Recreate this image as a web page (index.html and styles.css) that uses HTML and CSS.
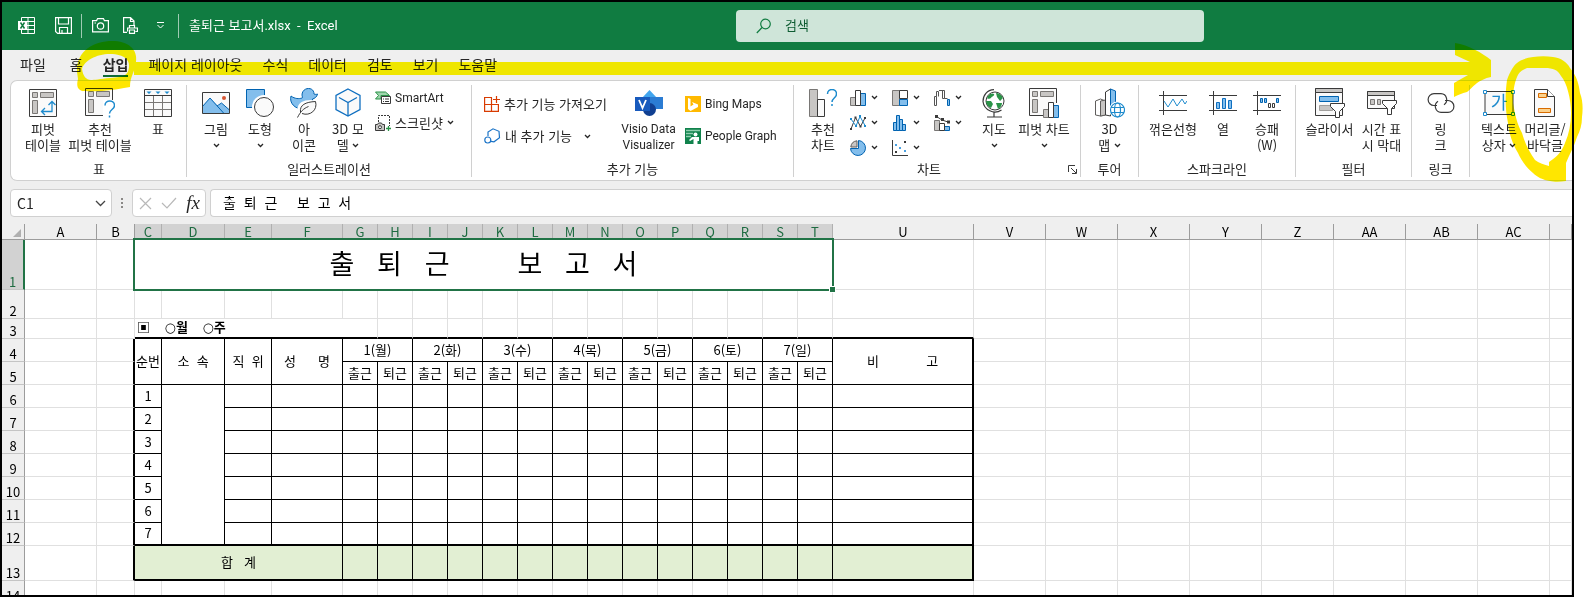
FILE: index.html
```html
<!DOCTYPE html>
<html lang="ko">
<head>
    <meta charset="utf-8">
    <title>출퇴근 보고서.xlsx - Excel</title>
    <link rel="stylesheet" href="styles.css">
</head>
<body>

<div class="window">
    <header class="titlebar">
        <div class="quick">
            <svg class="excel-logo" width="17" height="17" viewBox="0 0 17 17" fill="none" stroke="#fff"><path d="M3.500 4V.5h13v16h-13V13M10 .5v16M3.500 4.500h13M3.500 8.500h13M3.500 12.500h13"/><path d="M0 4h9v9H0z" fill="#fff" stroke="none"/><path d="M2.500 5.500l4 6M6.500 5.500l-4 6" stroke="#107c41" stroke-width="1.500"/></svg>
            <button class="qbtn" aria-label="저장"><svg width="17" height="17" viewBox="0 0 17 17" fill="none" stroke="#fff" stroke-width="1.200"><path d="M.6.6h15.800v15.800H2.600l-2-2zM3.500.6v6.400h10V.6M4.500 16v-5.500h8V16M7 13v3"/></svg></button>
            <span class="qsep"></span>
            <button class="qbtn" aria-label="카메라"><svg width="17" height="15" viewBox="0 0 17 15" fill="none" stroke="#fff" stroke-width="1.200"><path d="M.6 2.600h4l1-2h5.800l1 2h4v11.200H.6z"/><circle cx="8.500" cy="8" r="3.200"/><path d="M2.500 5h1.500"/></svg></button>
            <button class="qbtn" aria-label="빠른 인쇄"><svg width="15" height="17" viewBox="0 0 15 17" fill="none" stroke="#fff" stroke-width="1.200"><path d="M4 15.400H.6V.6h6.900l3.500 3.500V8M7.500.6v3.900H11M6.500 11V8.500h5V11M4.600 14.500V11h9.800v3.500h-2M6.500 13h5v3.400h-5z"/></svg></button>
            <button class="qbtn" aria-label="사용자 지정"><svg width="9" height="7" viewBox="0 0 9 7" fill="none" stroke="#fff"><path d="M1 .5h7M1.500 3l3 3 3-3"/></svg></button>
            <span class="qsep"></span>
            <span class="doc-title">출퇴근 보고서<span class="latin">.xlsx &nbsp;-&nbsp; Excel</span></span>
        </div>
        <label class="search">
            <svg width="16" height="16" viewBox="0 0 16 16" fill="none" stroke="#107c41" stroke-width="1.200"><circle cx="9.500" cy="6" r="4.800"/><path d="M6 9.500L.8 15"/></svg>
            <input type="text" placeholder="검색" aria-label="검색">
        </label>
    </header>

    <nav class="tabs">
        <button class="tab file">파일</button>
        <button class="tab">홈</button>
        <button class="tab active">삽입</button>
        <button class="tab">페이지 레이아웃</button>
        <button class="tab">수식</button>
        <button class="tab">데이터</button>
        <button class="tab">검토</button>
        <button class="tab">보기</button>
        <button class="tab">도움말</button>
    </nav>

    <div class="ribbon">
        <section class="group g-tables">
            <div class="items">
                <button class="big w50"><span class="ico"><svg width="28" height="28" viewBox="0 0 28 28" fill="none"><path d="M.5.5h27v27H.5z" fill="#fafafa" stroke="#3a3a3a"/><path d="M3.500 3.500h5v5h-5zM11.500 3.500h13v5h-13zM3.500 11.500h5v13h-5z" fill="#c8c6c4" stroke="#797775"/><path d="M12.500 22.500h10.500V12.500M16 19l-3.500 3.500L16 26M19.500 16l3.500-3.500 3.500 3.500" stroke="#1e8bcd" stroke-width="1.300"/></svg></span>피벗<br>테이블</button>
                <button class="big w64"><span class="ico"><svg width="30" height="30" viewBox="0 0 30 30" fill="none"><path d="M27.500 12V.5H.5v27H18" fill="#fafafa" stroke="#3a3a3a"/><path d="M3.500 3.500h5v5h-5zM11.500 3.500h13v5h-13zM3.500 11.500h5v13h-5z" fill="#c8c6c4" stroke="#797775"/><path d="M18 12h12v18H18z" fill="#fff"/><path d="M20 17.500c0-6 9.500-6 9.500 0 0 4-5 4-5 8M24.500 27.500v2" stroke="#1e8bcd" stroke-width="1.500"/></svg></span>추천<br>피벗 테이블</button>
                <button class="big w52"><span class="ico"><svg width="28" height="28" viewBox="0 0 28 28" fill="none"><path d="M.5.5h27v27H.5z" fill="#fafafa"/><path d="M9.500 7v20M18.500 7v20M1 13.500h26M1 20.500h26" stroke="#797775"/><path d="M.5.5h27v27H.5zM.5 6.500h27" stroke="#3a3a3a"/><path d="M2.500 2.500h5L5 5zM11.500 2.500h5L14 5zM20.500 2.500h5L23 5z" fill="#1e8bcd"/></svg></span>표</button>
            </div>
            <div class="group-name"><span>표</span></div>
        </section>

        <section class="group g-illust">
            <div class="items">
                <button class="big w44"><span class="ico"><svg width="28" height="22" viewBox="0 0 28 22"><path d="M.5.5h27v21H.5z" fill="#fafafa"/><path d="M.5 14.500L8 6l8 8 3.500-3 8 7v3.500H.5z" fill="#83beec"/><path d="M.5 14.500L8 6l14 15.500M15 14l4.500-3 8 7" fill="none" stroke="#0063b1"/><circle cx="22" cy="6" r="2" fill="#d65532"/><path d="M.5.5h27v21H.5z" fill="none" stroke="#3a3a3a"/></svg></span>그림<br><svg class="chev" viewBox="0 0 7 5"><path d="M1 1l2.500 2.500L6 1"/></svg></button>
                <button class="big w44"><span class="ico"><svg width="28" height="28" viewBox="0 0 28 28"><path d="M.5.5h18v18H.5z" fill="#83beec" stroke="#0063b1"/><circle cx="18" cy="18" r="12" fill="#fff"/><circle cx="18" cy="18" r="9.500" fill="#fafafa" stroke="#3a3a3a"/></svg></span>도형<br><svg class="chev" viewBox="0 0 7 5"><path d="M1 1l2.500 2.500L6 1"/></svg></button>
                <button class="big w44"><span class="ico"><svg width="28" height="30" viewBox="0 0 28 30"><path d="M1 8c4 3 8 3 11 2 1 0 0-2 0-3 0-8 12-9 12-1 1 .5 2.500.5 3.500 0-.5 3-3 4.500-5 5 1 4-4 10-10 10C5 21-1 15 1 8z" fill="#83beec" stroke="#0063b1"/><path d="M9 24c-1-8 4-12 18-10 1 9-5 15-15 12z" fill="#fff" stroke="#fff" stroke-width="3"/><path d="M10.500 24c-1-7 5-10 15-10.500C28 22 20 28.500 12 25.500M7.500 29.500c3-6 6-9 11-11" fill="#fafafa" stroke="#3a3a3a"/></svg></span>아<br>이콘</button>
                <button class="big w44"><span class="ico"><svg width="26" height="30" viewBox="0 0 26 30" fill="#fafafa" stroke="#0f6fc0" stroke-width="1.300"><path d="M13 1l12 6.500v14L13 28 1 21.500v-14z"/><path d="M4 9.500l9 5 9-5M13 14.500V28" fill="none"/></svg></span>3D 모<br>델 <svg class="chev" viewBox="0 0 7 5"><path d="M1 1l2.500 2.500L6 1"/></svg></button>
                <div class="stack rows25">
                    <button class="small latin"><svg width="16" height="14" viewBox="0 0 16 14"><path d="M.5 1h10l4 3.500H6V8H.5l3-3.500z" fill="#9fd5ad" stroke="#2b9348"/><path d="M6.500 5.500h9v7h-9z" fill="#fff" stroke="#3a3a3a"/><path d="M8 8h1M10 8h4M8 10.500h1M10 10.500h4" stroke="#3a3a3a"/></svg>SmartArt</button>
                    <button class="small"><svg width="16" height="16" viewBox="0 0 16 16" fill="none"><path d="M3.500 7V.5h11V11" stroke="#3a3a3a" stroke-dasharray="2 1"/><path d="M.5 9.500h2l1-1.500h3l1 1.500h2v6h-9z" fill="#c8c6c4" stroke="#3a3a3a"/><circle cx="5" cy="12.200" r="1.500" fill="#fff" stroke="#3a3a3a"/><path d="M13.500 11v5M11 13.500h5" stroke="#2b9348" stroke-width="1.300"/></svg>스크린샷 <svg class="chev" viewBox="0 0 7 5"><path d="M1 1l2.500 2.500L6 1"/></svg></button>
                </div>
            </div>
            <div class="group-name"><span>일러스트레이션</span></div>
        </section>

        <section class="group g-addins">
            <div class="items">
                <div class="stack rows32 w128">
                    <button class="small"><svg width="16" height="16" viewBox="0 0 16 16" fill="none" stroke="#d83b01" stroke-width="1.200"><path d="M8 1.500H.6v13.900h13.800V8.500H.6M7.500 1.500v13.900M12.500 0v7M9 3.500h7"/></svg>추가 기능 가져오기</button>
                    <button class="small"><svg width="17" height="16" viewBox="0 0 17 16" fill="none" stroke="#1a73c7" stroke-width="1.200"><path d="M4 8V4l5-3.200 6 2.500.5 6.500-5.500 4-3-.5"/><circle cx="3.800" cy="12" r="3"/></svg>내 추가 기능 <svg class="chev apart" viewBox="0 0 7 5"><path d="M1 1l2.500 2.500L6 1"/></svg></button>
                </div>
                <button class="big w73 latin"><span class="ico"><svg width="28" height="27" viewBox="0 0 28 27"><path d="M14.500 0L22 8l-7.500 8L7 8z" fill="#41a5ee"/><path d="M14 7h14v12H14z" fill="#2b7cd3"/><circle cx="14.500" cy="19.500" r="6.500" fill="#103f91"/><path d="M0 7h15v14H0z" fill="#185abd"/><path d="M4 10l3.500 8L11 10" fill="none" stroke="#fff" stroke-width="1.800"/></svg></span>Visio Data<br>Visualizer</button>
                <div class="stack rows32">
                    <button class="small latin"><svg width="16" height="16" viewBox="0 0 16 16"><path d="M0 0h16v16H0z" fill="#ffb900"/><path d="M3 2l2.500 1v7.500l3-2L7 6l6 2.500v2.500L5.500 15 3 13z" fill="#fff"/></svg>Bing Maps</button>
                    <button class="small latin"><svg width="16" height="16" viewBox="0 0 16 16"><path d="M0 0h16v16H0z" fill="#10824c"/><path d="M1 2.500h14M1 5.500h7M1 8.500h5" stroke="#8fd0ae" stroke-width="1.500"/><circle cx="10.500" cy="6.500" r="2" fill="#fff"/><path d="M7 9h7v4h-1.500v3h-4v-5L5 13l-1-1z" fill="#fff"/></svg>People Graph</button>
                </div>
            </div>
            <div class="group-name"><span>추가 기능</span></div>
        </section>

        <section class="group g-charts">
            <div class="items">
                <button class="big w50"><span class="ico"><svg width="28" height="28" viewBox="0 0 28 28" fill="none"><path d="M.5.5h8v27h-8z" fill="#c8c6c4" stroke="#797775"/><path d="M8.500 10.500h7v17h-7z" fill="#fafafa" stroke="#3a3a3a"/><path d="M18.500 5c0-6 9-6 9 0 0 4-4.500 4-4.500 8M23 15v2" stroke="#1e8bcd" stroke-width="1.500"/></svg></span>추천<br>차트</button>
                <div class="chart-grid">
                    <button class="small mini" aria-label="세로 막대형"><svg width="16" height="16" viewBox="0 0 16 16"><path d="M.5 7.500h5v8h-5z" fill="#c8c6c4" stroke="#797775"/><path d="M10.500 3.500h5v12h-5z" fill="#83beec" stroke="#0063b1"/><path d="M5.500.5h5v15h-5z" fill="#fff" stroke="#3a3a3a"/></svg><svg class="chev" viewBox="0 0 7 5"><path d="M1 1l2.500 2.500L6 1"/></svg></button>
                    <button class="small mini" aria-label="계층 구조"><svg width="16" height="16" viewBox="0 0 16 16"><path d="M.5.5h7v15h-7z" fill="#c8c6c4" stroke="#797775"/><path d="M7.500.5h8v8h-8z" fill="#fff" stroke="#3a3a3a"/><path d="M7.500 9.500h8v6h-8z" fill="#83beec" stroke="#0063b1"/></svg><svg class="chev" viewBox="0 0 7 5"><path d="M1 1l2.500 2.500L6 1"/></svg></button>
                    <button class="small mini" aria-label="폭포"><svg width="16" height="16" viewBox="0 0 16 16"><path d="M.5 15.500v-9h2v9zM2.500 6.500v-5h2v5M8.500.5h2v8h-2zM5 .5h5" fill="#fff" stroke="#555"/><path d="M10.500 8.500h3" stroke="#555"/><path d="M13.500 9.500h2v6h-2z" fill="#83beec" stroke="#0063b1"/></svg><svg class="chev" viewBox="0 0 7 5"><path d="M1 1l2.500 2.500L6 1"/></svg></button>
                    <button class="small mini" aria-label="꺾은선형"><svg width="16" height="15" viewBox="0 0 16 15" fill="none"><path d="M1 14L5.500 2.500l5 9L15 3" stroke="#3a3a3a"/><path d="M1 4l5 7L10 1.500l5 9" stroke="#1e8bcd"/><path d="M0 13h2v2H0zM4.500 1.500h2v2h-2zM9.500 10.500h2v2h-2zM14 2h2v2h-2z" fill="#3a3a3a"/><path d="M0 3h2v2H0zM5 10h2v2H5zM9 0h2v2H9zM14 10h2v2h-2z" fill="#1e8bcd"/></svg><svg class="chev" viewBox="0 0 7 5"><path d="M1 1l2.500 2.500L6 1"/></svg></button>
                    <button class="small mini" aria-label="통계"><svg width="16" height="16" viewBox="0 0 16 16" fill="#83beec" stroke="#0063b1"><path d="M1.500 7.500h3v8h-3zM4.500.5h3v15h-3zM7.500 4.500h3v11h-3zM10.500 9.500h3v6h-3z"/></svg><svg class="chev" viewBox="0 0 7 5"><path d="M1 1l2.500 2.500L6 1"/></svg></button>
                    <button class="small mini" aria-label="혼합"><svg width="16" height="16" viewBox="0 0 16 16"><path d="M.5 5.500h5v10h-5z" fill="#c8c6c4" stroke="#797775"/><path d="M10.500 11.500h5v4h-5z" fill="#83beec" stroke="#0063b1"/><path d="M5.500 8.500h5v7h-5z" fill="#fff" stroke="#3a3a3a"/><path d="M2.500 1.500L8 5l6 2" fill="none" stroke="#3a3a3a"/><path d="M1 0h3v3H1zM7 3h3v3H7zM13 5.500h3v3h-3z" fill="#3a3a3a"/></svg><svg class="chev" viewBox="0 0 7 5"><path d="M1 1l2.500 2.500L6 1"/></svg></button>
                    <button class="small mini" aria-label="원형"><svg width="16" height="16" viewBox="0 0 16 16"><path d="M8.500.5v8h-8A7.500 7.500 0 1 0 8.500.5z" fill="#83beec" stroke="#0063b1"/><path d="M7 .8V7H.8A7 7 0 0 1 7 .8z" fill="#c8c6c4" stroke="#605e5c"/></svg><svg class="chev" viewBox="0 0 7 5"><path d="M1 1l2.500 2.500L6 1"/></svg></button>
                    <button class="small mini" aria-label="분산형"><svg width="16" height="16" viewBox="0 0 16 16"><path d="M.5 0v15.500H16" fill="none" stroke="#3a3a3a"/><path d="M12 1h2v2h-2zM3 11h2v2H3z" fill="#3a3a3a"/><path d="M3 4h2v2H3zM7 7h2v2H7zM12 10h2v2h-2z" fill="#4ba0e0"/></svg><svg class="chev" viewBox="0 0 7 5"><path d="M1 1l2.500 2.500L6 1"/></svg></button>
                </div>
                <button class="big w36"><span class="ico"><svg width="24" height="29" viewBox="0 0 24 29" fill="none"><circle cx="13" cy="12" r="9" fill="#fff" stroke="#3a3a3a"/><path d="M6 7c2-3 5-3 6-2 1 2-2 2-3 4-1 1-4 1-4 0zM14 4c3 0 6 2 7 5l-3 3-3-4zM4 12l5 0 2 3-2 4c-3-1-5-4-5-7zM14 14h6c0 3-2 5-4 6z" fill="#2b9348"/><path d="M12 .7C5 1 1 6 1 12.500 2 21 12 26 19.500 21M12 23.500v4M5 28h15" stroke="#3a3a3a" stroke-width="1.200"/></svg></span>지도<br><svg class="chev" viewBox="0 0 7 5"><path d="M1 1l2.500 2.500L6 1"/></svg></button>
                <button class="big w64"><span class="ico"><svg width="30" height="30" viewBox="0 0 30 30"><path d="M27.500 15V.5H.5v27H14" fill="#fafafa" stroke="#3a3a3a"/><path d="M3.500 3.500h5v5h-5zM11.500 3.500h13v5h-13zM3.500 11.500h5v13h-5z" fill="#c8c6c4" stroke="#797775"/><path d="M14.500 21.500h5v8h-5z" fill="#c8c6c4" stroke="#797775"/><path d="M24.500 17.500h5v12h-5z" fill="#83beec" stroke="#0063b1"/><path d="M19.500 14.500h5v15h-5z" fill="#fff" stroke="#3a3a3a"/></svg></span>피벗 차트<br><svg class="chev" viewBox="0 0 7 5"><path d="M1 1l2.500 2.500L6 1"/></svg></button>
            </div>
            <div class="group-name"><span>차트</span><button class="launcher" aria-label="차트 옵션"><svg width="9" height="9" viewBox="0 0 9 9" fill="none" stroke="#3a3a3a"><path d="M.5 7V.5H7M3 3l5 5M8.500 4v4.500H4"/></svg></button></div>
        </section>

        <section class="group g-tour">
            <div class="items">
                <button class="big w44"><span class="ico"><svg width="30" height="30" viewBox="0 0 30 30"><path d="M.5 13l5-2 5 2v14l-5 1-5-1z" fill="#fff" stroke="#605e5c"/><path d="M5.500 13l5-1v15l-5 1z" fill="#c8c6c4" stroke="#605e5c"/><path d="M10.500 4l5-3 0 27-5-1z" fill="#fff" stroke="#3a3a3a"/><path d="M15.500 1l5 2v20h-5z" fill="#83beec" stroke="#0063b1"/><circle cx="22.500" cy="22" r="8.500" fill="#fff"/><g fill="none" stroke="#1e8bcd" stroke-width="1.200"><circle cx="22.500" cy="22" r="7"/><ellipse cx="22.500" cy="22" rx="3" ry="7"/><path d="M16 19.500h13M16 24.500h13"/></g></svg></span>3D<br>맵 <svg class="chev" viewBox="0 0 7 5"><path d="M1 1l2.500 2.500L6 1"/></svg></button>
            </div>
            <div class="group-name"><span>투어</span></div>
        </section>

        <section class="group g-spark">
            <div class="items">
                <button class="big w60"><span class="ico"><svg width="28" height="24" viewBox="0 0 28 24" fill="none"><path d="M0 4.500h28M0 19.500h28M4.500 0v24" stroke="#3a3a3a"/><path d="M5 10l4 6 5-8 4 7 5-7 3 5 2-3" stroke="#1e8bcd"/></svg></span>꺾은선형</button>
                <button class="big w40"><span class="ico"><svg width="28" height="24" viewBox="0 0 28 24" fill="none"><path d="M0 4.500h28M0 19.500h28M4.500 0v24" stroke="#3a3a3a"/><path d="M7.500 11.500h3v6h-3zM13.500 7.500h3v10h-3zM19.500 9.500h3v8h-3z" fill="#83beec" stroke="#0f6fc0"/></svg></span>열</button>
                <button class="big w48"><span class="ico"><svg width="28" height="24" viewBox="0 0 28 24" fill="none"><path d="M0 4.500h28M0 19.500h28M4.500 0v24" stroke="#3a3a3a"/><path d="M7.500 7.500h2v4h-2zM11.500 7.500h2v4h-2zM23.500 7.500h2v4h-2z" fill="#83beec" stroke="#0063b1"/><path d="M15.500 12.500h2v4h-2zM19.500 12.500h2v4h-2z" fill="#fff" stroke="#3a3a3a"/></svg></span>승패<br>(W)</button>
            </div>
            <div class="group-name"><span>스파크라인</span></div>
        </section>

        <section class="group g-filter">
            <div class="items">
                <button class="big w56"><span class="ico"><svg width="30" height="30" viewBox="0 0 30 30"><path d="M.5.5h27v27H.5z" fill="#fafafa" stroke="#3a3a3a"/><path d="M.5.5h27v4H.5z" fill="#c8c6c4" stroke="#3a3a3a"/><path d="M4.500 8.500h19v5h-19z" fill="#83beec" stroke="#0063b1"/><path d="M4.500 17.500h13v5h-13z" fill="#c8c6c4" stroke="#a19f9d"/><path d="M15.500 15.500h14v3l-5 5v6h-4v-6l-5-5z" fill="#fff" stroke="#3a3a3a"/></svg></span>슬라이서</button>
                <button class="big w48"><span class="ico"><svg width="30" height="24" viewBox="0 0 30 24"><path d="M.5.5h27v17H.5z" fill="#fafafa" stroke="#3a3a3a"/><path d="M.5.5h27v4H.5z" fill="#c8c6c4" stroke="#3a3a3a"/><path d="M3.500 8.500h4v5h-4zM10.500 8.500h3v5h-3z" fill="#c8c6c4" stroke="#797775"/><path d="M15.500 9.500h14v3l-5 5v6h-4v-6l-5-5z" fill="#fff" stroke="#3a3a3a"/></svg></span>시간 표<br>시 막대</button>
            </div>
            <div class="group-name"><span>필터</span></div>
        </section>

        <section class="group g-link">
            <div class="items">
                <button class="big w40"><span class="ico"><svg width="28" height="20" viewBox="0 0 28 20" fill="none" stroke="#3a3a3a" stroke-width="1.200"><path d="M10 12.500H7A5.500 5.500 0 0 1 7 .7h7a6 6 0 0 1 3 11"/><path d="M18 7.500h3a5.900 5.900 0 0 1 0 11.800h-7a6 6 0 0 1-3-11"/></svg></span>링<br>크</button>
            </div>
            <div class="group-name"><span>링크</span></div>
        </section>

        <section class="group g-text">
            <div class="items">
                <button class="big w46"><span class="ico"><svg width="32" height="28" viewBox="0 0 32 28"><path d="M2 2.500h28v23H2z" fill="#fafafa" stroke="#3a3a3a"/><path d="M.5 1.500h3v3h-3zM28.500 1.500h3v3h-3zM.5 23.500h3v3h-3zM28.500 23.500h3v3h-3z" fill="#fff" stroke="#1e8bcd"/><text class="ga" x="16" y="20" text-anchor="middle">가</text></svg></span>텍스트<br>상자 <svg class="chev" viewBox="0 0 7 5"><path d="M1 1l2.500 2.500L6 1"/></svg></button>
                <button class="big w46"><span class="ico"><svg width="22" height="28" viewBox="0 0 22 28"><path d="M.5.500h13l7 7v20H.5z" fill="#fafafa" stroke="#3a3a3a"/><path d="M4.500 4.500h8v4h-8zM4.500 19.500h12v4h-12z" fill="#fcd28c" stroke="#d86c00"/><path d="M13.500.5v7h7" fill="#fff" stroke="#3a3a3a"/></svg></span>머리글/<br>바닥글</button>
            </div>
        </section>
    </div>

    <div class="formula-bar">
        <div class="name-box">
            <input type="text" value="C1" aria-label="이름 상자">
            <svg width="11" height="7" viewBox="0 0 11 7" fill="none" stroke="#444" stroke-width="1.300"><path d="M1 1l4.500 4.500L10 1"/></svg>
        </div>
        <svg class="dots" width="3" height="11" viewBox="0 0 3 11" fill="#8a8886"><path d="M0 0h2v2H0zM0 4h2v2H0zM0 8h2v2H0z"/></svg>
        <div class="fx-box">
            <svg width="13" height="13" viewBox="0 0 13 13" fill="none" stroke="#b8b8b8" stroke-width="1.200"><path d="M1 1l11 11M12 1L1 12"/></svg>
            <svg width="16" height="12" viewBox="0 0 16 12" fill="none" stroke="#b8b8b8" stroke-width="1.200"><path d="M1 6l5 5L15 1"/></svg>
            <button class="fx" aria-label="함수 삽입">fx</button>
        </div>
        <input class="formula" type="text" value="출  퇴  근     보  고  서" aria-label="수식 입력줄">
    </div>

    <div class="sheet">
        <table class="grid" id="grid">
            <colgroup id="cols"></colgroup>
            <thead id="head"></thead>
            <tbody id="rows"></tbody>
        </table>
    </div>
</div>

<!-- yellow highlighter marks -->
<svg class="marker" width="1583" height="200" viewBox="0 0 1583 200" fill="#ffe600">
    <path fill-rule="evenodd" d="M77 72C76 50 95 41 112 41c16 0 26 8 24 21-1 10-6 14-6 25l-6 1c-14 3-34 4-42 3-6-2-5-8-4-12zM82 69c2-8 14-15 28-15 15 0 20 7 19 13-1 8-4 10-19 11-10 1-16 2-19 2-5 0-8-4-9-11z"/>
    <path d="M134 62h1336l-15-7V43c14 2 27 10 36 17v17c-6 1-11 4-14 6-5 4-7 7-10 9-5 1-9 3-13 5V83l14-8H134z"/>
    <path fill-rule="evenodd" d="M1507 80c3-9 8-16 10-17 6-6 24-8 36-6 8 1 14 5 17 11 7 8 9 17 10 25 3 8 3 16 2 24 0 8-2 14-5 20-3 10-8 18-11 26v18c-6 1-12 1-16 0-7-1-13-4-17-8-7-6-12-13-15-20-6-10-9-20-10-30-3-15-3-28-1-43zM1517 77c-3 7-4 15-4 26 2 11 4 21 9 30 3 11 8 20 13 27 4 3 8 4 14 6v-4c8-5 13-11 16-19 4-9 6-19 6-30 0-14-4-30-10-37-3-6-8-8-16-8h-18c-5 2-8 4-10 9z"/>
</svg>

<script src="script.js"></script>
</body>
</html>
```

FILE: styles.css
```css
* {
    box-sizing: border-box;
}
body {
    margin: 0;
    position: relative;
    background: #fff;
    color: #262626;
    font-family: "Noto Sans CJK KR", sans-serif;
    font-size: 13px;
    line-height: 16px;
}
button, input {
    margin: 0;
    padding: 0;
    border: 0;
    background: none;
    color: inherit;
    font: inherit;
}
.window {
    display: flex;
    flex-direction: column;
    height: 100vh;
    margin-right: 9px;
    border: 2px solid #000;
    background: #efefef;
    overflow: hidden;
}
button.latin, .latin {
    font-family: Roboto, "Noto Sans CJK KR", sans-serif;
    font-size: 12px;
}

/* title bar */
.titlebar {
    display: flex;
    flex: none;
    align-items: center;
    height: 48px;
    padding-bottom: 1px;
    background: #107c41;
    color: #fff;
}
.quick {
    display: flex;
    flex: 0 0 734px;
    align-items: center;
    padding-left: 16px;
}
.excel-logo {
    margin-right: 13px;
}
.qbtn {
    display: flex;
    align-items: center;
    justify-content: center;
    width: 30px;
    height: 24px;
}
.qsep {
    width: 1px;
    height: 24px;
    margin: 0 3px;
    background: #9fcbb3;
}
.doc-title {
    margin-left: 7px;
}
.doc-title .latin {
    font-size: 13px;
}
.search {
    display: flex;
    flex: 0 1 468px;
    align-items: center;
    gap: 13px;
    height: 32px;
    padding-left: 20px;
    border-radius: 4px;
    background: #cfe5d9;
}
.search input {
    flex: 1;
    padding-bottom: 2px;
    color: #107c41;
    outline: 0;
}
.search input::placeholder {
    color: #0e5c32;
    opacity: 1;
}

/* tabs */
.tabs {
    display: flex;
    flex: none;
    gap: 20px;
    height: 30px;
    padding: 4px 0 0 18px;
    font-size: 14px;
}
.tab {
    height: 23px;
    padding-bottom: 2px;
    border-bottom: 2px solid transparent;
    white-space: nowrap;
}
.tab.file {
    margin-right: 4px;
}
.tab.active {
    border-bottom-color: #0e6b38;
    font-weight: bold;
}

/* ribbon */
.ribbon {
    display: flex;
    flex: none;
    margin-left: 8px;
    padding: 4px 0 3px 1px;
    border: 1px solid #d0d0d0;
    border-right: 0;
    border-radius: 7px 0 0 7px;
    background: #fff;
    overflow: hidden;
}
.group {
    flex: none;
    border-right: 1px solid #d0d0d0;
}
.g-tables { width: 175px; }
.g-illust { width: 285px; }
.g-addins { width: 322px; }
.g-charts { width: 287px; }
.g-tour { width: 58px; }
.g-spark { width: 157px; }
.g-filter { width: 116px; }
.g-link { width: 58px; }
.g-text {
    flex: 1;
    border-right: 0;
}
.items {
    display: flex;
    align-items: flex-start;
    justify-content: center;
    height: 76px;
}
.g-tables .items, .g-illust .items, .g-addins .items, .g-charts .items, .g-text .items {
    justify-content: flex-start;
    padding-left: 6px;
}
.g-illust .items {
    padding-left: 7px;
}
.g-addins .items {
    padding-left: 12px;
}
.g-charts .items {
    padding-left: 4px;
}
.group-name {
    display: flex;
    height: 16px;
}
.group-name span {
    flex: 1;
    text-align: center;
}
.launcher {
    width: 16px;
    padding-left: 4px;
    line-height: 9px;
    text-align: left;
}
.big {
    display: block;
    flex: none;
    text-align: center;
    white-space: nowrap;
}
.ico {
    display: flex;
    align-items: center;
    justify-content: center;
    height: 36px;
}
.w36 { width: 36px; }
.w40 { width: 40px; }
.w44 { width: 44px; }
.w46 { width: 46px; }
.w48 { width: 48px; }
.w50 { width: 50px; }
.w52 { width: 52px; }
.w56 { width: 56px; }
.w60 { width: 60px; }
.w64 { width: 64px; }
.w73 { width: 73px; }
.w128 { width: 128px; }
.chev {
    width: 7px;
    height: 5px;
    fill: none;
    stroke: #262626;
    stroke-width: 1.3;
    vertical-align: 2px;
}
.chev.apart {
    margin-left: 8px;
}
.stack {
    display: flex;
    flex: none;
    flex-direction: column;
}
.rows25 {
    margin-left: 5px;
}
.rows25 .small {
    height: 25px;
}
.rows32 {
    padding-top: 3px;
}
.rows32 .small {
    height: 32px;
}
.small {
    display: flex;
    align-items: center;
    gap: 4px;
    white-space: nowrap;
}
.chart-grid {
    display: grid;
    grid-template-columns: repeat(3, 42px);
    grid-auto-rows: 25px;
    margin-left: 2px;
}
.mini {
    gap: 5px;
}
.ga {
    fill: #1e8bcd;
    font-size: 18px;
}

/* formula bar */
.formula-bar {
    display: flex;
    flex: none;
    align-items: center;
    padding: 8px 0 0 8px;
}
.name-box, .fx-box, .formula {
    height: 28px;
    border: 1px solid #d0d0d0;
    border-radius: 4px;
    background: #fff;
}
.name-box {
    display: flex;
    align-items: center;
    width: 102px;
    padding: 0 5px 0 6px;
    font-size: 14px;
}
.name-box input {
    flex: 1;
    width: 60px;
}
.dots {
    margin: 0 8px 0 9px;
}
.fx-box {
    display: flex;
    align-items: center;
    justify-content: space-between;
    width: 74px;
    margin-right: 4px;
    padding: 0 5px 0 6px;
}
.fx {
    font-family: "Liberation Serif", serif;
    font-size: 19px;
    font-style: italic;
}
.formula {
    flex: 1;
    padding: 0 0 3px 12px;
    border-right: 0;
    border-radius: 4px 0 0 4px;
    color: #000;
    font-size: 14px;
}

/* sheet */
.sheet {
    flex: 1;
    min-height: 0;
    padding-top: 7px;
    overflow: hidden;
}
.grid {
    width: 100%;
    border-collapse: separate;
    border-spacing: 0;
    table-layout: fixed;
    background: #fff;
    color: #000;
}
.grid th, .grid td {
    padding: 0;
    border: 0 solid #e0e0e0;
    border-width: 0 1px 1px 0;
    font-weight: normal;
    line-height: 15px;
    text-align: center;
    white-space: pre;
}
.grid td {
    padding-bottom: 2px;
}
.grid thead th {
    height: 16px;
    border-color: #9c9c9c;
    background: #efefef;
}
.grid tbody th {
    border-color: #c4c4c4 #9c9c9c #c4c4c4 #c4c4c4;
    background: #efefef;
    vertical-align: bottom;
}
.grid thead .sel {
    border-right-color: #b0b0b0;
    background: #d2d2d2;
    color: #1e6b41;
}
.grid tbody .sel {
    border-right: 2px solid #217346;
    background: #d2d2d2;
    color: #1e6b41;
}
.grid .corner {
    text-align: right;
    vertical-align: bottom;
}
.corner svg {
    display: block;
    margin: 0 3px 2px auto;
}
.grid .title {
    position: relative;
    padding-bottom: 4px;
    font-size: 27px;
    line-height: 40px;
}
.selection {
    position: absolute;
    inset: -2px;
    border: 2px solid #217346;
}
.selection::after {
    content: "";
    position: absolute;
    right: -4px;
    bottom: -4px;
    width: 5px;
    height: 5px;
    border: 1px solid #fff;
    background: #217346;
}
.grid .options {
    padding-left: 2px;
    font-weight: bold;
    text-align: left;
}
.mark {
    font-family: "DejaVu Sans", sans-serif;
}
.grid .line {
    border-color: #000;
}
.grid .thick-right {
    border-right: 2px solid #000;
}
.grid .thick-bottom {
    border-bottom: 2px solid #000;
}
.grid .total {
    background: #e2efd3;
}

.marker {
    position: absolute;
    top: 0;
    left: 0;
    mix-blend-mode: darken;
    pointer-events: none;
}
```

FILE: script.js
```javascript
// Column letters and widths
const columns = [
    ['A', 72], ['B', 38], ['C', 27], ['D', 63], ['E', 47], ['F', 71],
    ['G', 35], ['H', 35], ['I', 35], ['J', 35], ['K', 35], ['L', 35], ['M', 35],
    ['N', 35], ['O', 35], ['P', 35], ['Q', 35], ['R', 35], ['S', 35], ['T', 35],
    ['U', 141], ['V', 72], ['W', 72], ['X', 72], ['Y', 72], ['Z', 72],
    ['AA', 72], ['AB', 72], ['AC', 72], ['', 0]
];
const days = ['월', '화', '수', '목', '금', '토', '일'];
const sp = n => ' '.repeat(n);

function cell(text, cls, attrs) {
    return `<td class="${cls || ''}" ${attrs || ''}>${text || ''}</td>`;
}

function cells(count, cls) {
    return cell('', cls).repeat(count);
}

function row(number, height, content) {
    const cls = number === 1 ? 'sel' : '';
    return `<tr style="height:${height}px"><th class="${cls}">${number}</th>${content}</tr>`;
}

// Row of the report: A and B in front, V to AD behind
function reportRow(number, height, content) {
    return row(number, height, cell() + cell('', 'thick-right') + content + cells(9));
}

function renderHead() {
    document.getElementById('cols').innerHTML = '<col style="width:23px">' +
        columns.map(c => c[1] ? `<col style="width:${c[1]}px">` : '<col>').join('');
    document.getElementById('head').innerHTML = '<tr><th class="corner">' +
        '<svg width="8" height="8" viewBox="0 0 8 8"><path d="M8 0v8H0z" fill="#b0b0b0"/></svg></th>' +
        columns.map((c, i) => `<th class="${i > 1 && i < 20 ? 'sel' : ''}">${c[0]}</th>`).join('') + '</tr>';
}

function renderRows() {
    let html = '';
    const title = '출' + sp(3) + '퇴' + sp(3) + '근' + sp(9) + '보' + sp(3) + '고' + sp(3) + '서';
    const circle = '<span class="mark">○</span>';
    html += row(1, 50, cells(2) + cell(title + '<div class="selection"></div>', 'title', 'colspan="18"') + cells(10));
    html += row(2, 29, cells(30));
    html += row(3, 20, cells(2) +
        cell('▣' + sp(4) + circle + '월' + sp(4) + circle + '주', 'options thick-bottom', 'colspan="5"') +
        cells(14, 'thick-bottom') + cells(9));

    html += reportRow(4, 23,
        cell('순번', 'line', 'rowspan="2"') +
        cell('소' + sp(2) + '속', 'line', 'rowspan="2"') +
        cell('직' + sp(2) + '위', 'line', 'rowspan="2"') +
        cell('성' + sp(6) + '명', 'line', 'rowspan="2"') +
        days.map((d, i) => cell(`${i + 1}(${d})`, 'line', 'colspan="2"')).join('') +
        cell('비' + sp(13) + '고', 'line thick-right', 'rowspan="2"'));
    html += reportRow(5, 23, days.map(() => cell('출근', 'line') + cell('퇴근', 'line')).join(''));

    for (let n = 1; n <= 7; n++) {
        const cls = n === 7 ? 'line thick-bottom' : 'line';
        html += reportRow(n + 5, 23,
            cell(n, cls) +
            (n === 1 ? cell('', 'line thick-bottom', 'rowspan="7"') : '') +
            cells(16, cls) + cell('', cls + ' thick-right'));
    }

    html += reportRow(13, 35,
        cell('합' + sp(3) + '계', 'line total thick-bottom', 'colspan="4"') +
        cells(14, 'line total thick-bottom') +
        cell('', 'line total thick-bottom thick-right'));
    html += row(14, 23, cells(30));
    document.getElementById('rows').innerHTML = html;
}

// Initial render
renderHead();
renderRows();
```
